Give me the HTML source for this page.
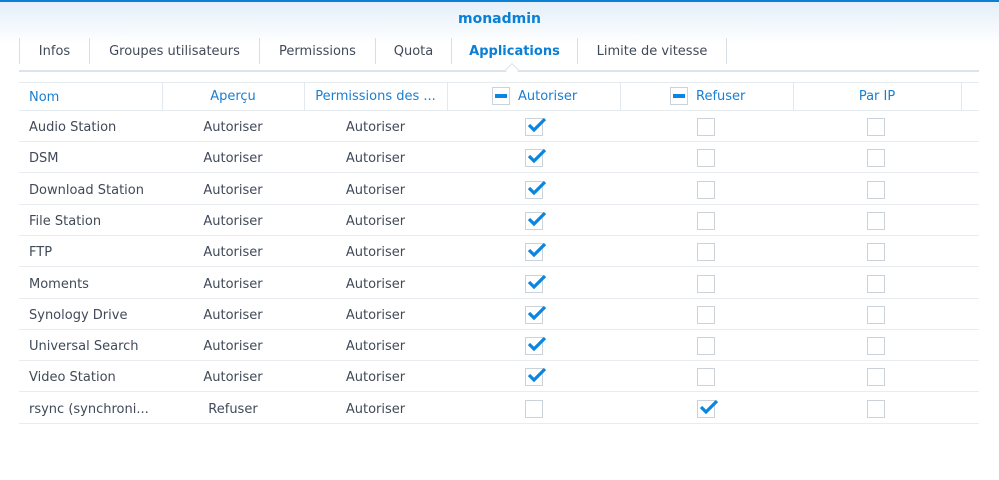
<!DOCTYPE html>
<html><head><style>
*{margin:0;padding:0;box-sizing:border-box}
body{width:999px;height:480px;background:#fff;font-family:"DejaVu Sans","Liberation Sans",sans-serif;font-size:13px;color:#404a58;position:relative;overflow:hidden}
.top{position:absolute;left:0;top:0;width:999px;height:2px;background:#0b7fd4}
.hdr{position:absolute;left:0;top:2px;width:999px;height:70px;background:linear-gradient(#e3eff9,#fff 60%)}
.title{position:absolute;top:11px;width:999px;text-align:center;font-weight:bold;color:#0a7fd6;font-size:14px}
.tab{position:absolute;top:38px;height:26px;line-height:28px;text-align:center;border-left:1px solid #d9dee4}
.tab.act{color:#0a7fd6;font-weight:bold}
.tline{position:absolute;left:19px;top:70px;width:960px;height:2px;background:#dde3ea}
.notch{position:absolute;left:507px;top:65px;width:10px;height:10px;background:#fff;border-left:1px solid #dde3ea;border-top:1px solid #dde3ea;transform:rotate(45deg)}
.th{position:absolute;top:82px;height:29px;line-height:30px;color:#1a7ed2;border-top:1px solid #e6ebf0;border-bottom:1px solid #e6ebf0}
.col{position:absolute;top:82px;height:29px;width:1px;background:#e3e8ee}
.row{position:absolute;left:19px;width:960px;height:31px;border-bottom:1px solid #e8ecf0}
.c{position:absolute;top:0;line-height:33px}
.cb{position:absolute;top:7px;width:18px;height:18px;border:1px solid #ccd2d9;background:#fff}
.mn{position:absolute;top:6px;width:18px;height:18px;border:1px solid #ccd2d9;background:#fff}
.mn:after{content:"";position:absolute;left:2px;top:6px;width:12px;height:4px;background:#0a86e0}
</style></head><body>
<div class="top"></div><div class="hdr"></div>
<div class="title">monadmin</div>
<div class="tab" style="left:19px;width:70px">Infos</div>
<div class="tab" style="left:89px;width:170px">Groupes utilisateurs</div>
<div class="tab" style="left:259px;width:116px">Permissions</div>
<div class="tab" style="left:375px;width:76px">Quota</div>
<div class="tab act" style="left:451px;width:126px">Applications</div>
<div class="tab" style="left:577px;width:150px;border-right:1px solid #d9dee4">Limite de vitesse</div>
<div class="tline"></div><div class="notch"></div>
<div class="th" style="left:19px;width:960px"></div>
<div class="th" style="left:29px">Nom</div>
<div class="th" style="left:162px;width:142px;text-align:center;border:0">Aperçu</div>
<div class="th" style="left:304px;width:143px;text-align:center;border:0">Permissions des ...</div>
<div class="mn" style="left:492px;top:87px"></div><div class="th" style="left:518px;border:0">Autoriser</div>
<div class="mn" style="left:670px;top:87px"></div><div class="th" style="left:696px;border:0">Refuser</div>
<div class="th" style="left:793px;width:168px;text-align:center;border:0">Par IP</div>
<div class="col" style="left:162px"></div><div class="col" style="left:304px"></div><div class="col" style="left:447px"></div><div class="col" style="left:620px"></div><div class="col" style="left:793px"></div><div class="col" style="left:961px"></div>
<div id="rows"></div>
<script>
var n=["Audio Station","DSM","Download Station","File Station","FTP","Moments","Synology Drive","Universal Search","Video Station","rsync (synchroni..."];
var ck='<svg width="20" height="16" viewBox="0 0 20 16" style="position:absolute;left:1px;top:-2px"><path d="M2 8 L7 13 L18 2" fill="none" stroke="#0a86e0" stroke-width="3.2"/></svg>';
var h="";
for(var i=0;i<10;i++){var y=111+i*31.3;var r=i==9;
h+='<div class="row" style="top:'+y+'px"><div class="c" style="left:10px">'+n[i]+'</div>'+
'<div class="c" style="left:143px;width:142px;text-align:center">'+(r?'Refuser':'Autoriser')+'</div>'+
'<div class="c" style="left:285px;width:143px;text-align:center">Autoriser</div>'+
'<div class="cb" style="left:506px">'+(r?'':ck)+'</div>'+
'<div class="cb" style="left:678px">'+(r?ck:'')+'</div>'+
'<div class="cb" style="left:848px"></div></div>';}
document.getElementById("rows").innerHTML=h;
</script>
</body></html>
